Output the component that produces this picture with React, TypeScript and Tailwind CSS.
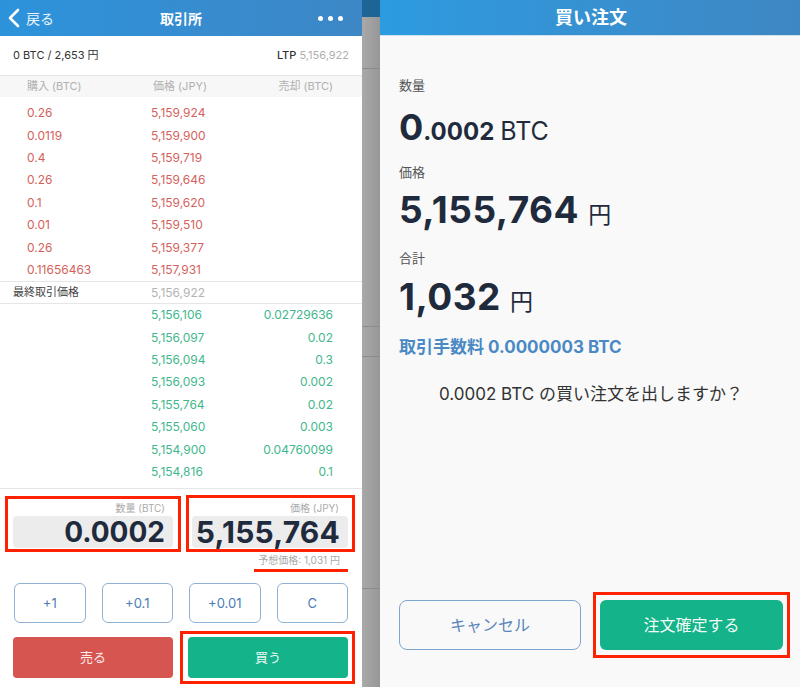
const asks = [
  ["0.26", "5,159,924"],
  ["0.0119", "5,159,900"],
  ["0.4", "5,159,719"],
  ["0.26", "5,159,646"],
  ["0.1", "5,159,620"],
  ["0.01", "5,159,510"],
  ["0.26", "5,159,377"],
  ["0.11656463", "5,157,931"],
];

const bids = [
  ["5,156,106", "0.02729636"],
  ["5,156,097", "0.02"],
  ["5,156,094", "0.3"],
  ["5,156,093", "0.002"],
  ["5,155,764", "0.02"],
  ["5,155,060", "0.003"],
  ["5,154,900", "0.04760099"],
  ["5,154,816", "0.1"],
];

function Exchange() {
  return (
    <div className="w-[362px] h-[687px] bg-white flex flex-col shrink-0">
      <div className="h-[36px] bg-linear-to-r from-[#2c93db] to-[#3d87c6] flex items-center px-[8px] text-white">
        <div className="flex items-center w-[100px]">
          <svg width="12" height="20" viewBox="0 0 12 20">
            <polyline points="10,2 2,10 10,18" fill="none" stroke="white" strokeWidth="2.6" strokeLinecap="round" strokeLinejoin="round" />
          </svg>
          <span className="ml-[6px] text-[14px] text-white/90">戻る</span>
        </div>
        <div className="flex-1 text-center text-[14px] font-bold">取引所</div>
        <div className="w-[100px] flex justify-end gap-[5px] pr-[11px]">
          <span className="w-[5px] h-[5px] rounded-full bg-white" />
          <span className="w-[5px] h-[5px] rounded-full bg-white" />
          <span className="w-[5px] h-[5px] rounded-full bg-white" />
        </div>
      </div>

      <div className="h-[40px] flex items-center justify-between px-[13px] border-b border-[#e6e6e6] text-[11px] text-[#333]">
        <span>0 BTC / 2,653 円</span>
        <span>
          <span className="font-medium">LTP</span> <span className="text-[#b0b0b0]">5,156,922</span>
        </span>
      </div>

      <div className="h-[21px] bg-[#f7f7f7] flex items-center pl-[27px] pr-[29px] text-[11px] text-[#b0b0b0]">
        <span className="w-[126px]">購入 (BTC)</span>
        <span className="flex-1">価格 (JPY)</span>
        <span>売却 (BTC)</span>
      </div>

      <div className="pt-[5px] text-[12px]">
        {asks.map(([q, p], i) => (
          <div key={i} className="h-[22.4px] flex items-center pl-[27px] text-[#d4625c]">
            <span className="w-[124px]">{q}</span>
            <span>{p}</span>
          </div>
        ))}
      </div>

      <div className="h-[23px] border-t border-b border-[#e6e6e6] flex items-center pl-[13px] text-[11px]">
        <span className="w-[138px] text-[#444]">最終取引価格</span>
        <span className="text-[12px] text-[#b3b3b3]">5,156,922</span>
      </div>

      <div className="text-[12px] pb-[5px] border-b border-[#e6e6e6]">
        {bids.map(([p, q], i) => (
          <div key={i} className="h-[22.4px] flex items-center pl-[151px] pr-[29px] text-[#3fb78c]">
            <span className="flex-1">{p}</span>
            <span>{q}</span>
          </div>
        ))}
      </div>

      <div className="flex px-[13px] gap-[19px] pt-[12px]">
        <div className="relative w-[160px]">
          <div className="h-[15px] text-right pr-[8px] text-[10px] leading-[15px] text-[#aaa]">数量 (BTC)</div>
          <div className="h-[32px] rounded-[4px] bg-[#ececec] flex items-center justify-end pr-[8px] text-[28px] font-bold text-[#1f2b3d] leading-none">
            0.0002
          </div>
          <span className="absolute -left-[8px] -right-[8px] -top-[5px] -bottom-[4px] border-[3px] border-[#ff2200]" />
        </div>
        <div className="relative w-[156px]">
          <div className="h-[15px] text-right pr-[9px] text-[10px] leading-[15px] text-[#aaa]">価格 (JPY)</div>
          <div className="h-[32px] rounded-[4px] bg-[#ececec] flex items-center justify-end pr-[8px] text-[30px] tracking-[0.2px] font-bold text-[#1f2b3d] leading-none">
            5,155,764
          </div>
          <span className="absolute -left-[6px] -right-[7px] -top-[6px] -bottom-[4px] border-[3px] border-[#ff2200]" />
        </div>
      </div>

      <div className="mt-[5px] h-[14px] flex justify-end pr-[22px]">
        <span className="relative text-[10px] leading-[14px] text-[#aaa]">
          予想価格: 1,031 円
          <span className="absolute -left-[4px] -right-[8px] top-[16px] h-[3px] bg-[#ff2200]" />
        </span>
      </div>

      <div className="mt-[16px] px-[14px] grid grid-cols-4 gap-4">
        {["+1", "+0.1", "+0.01", "C"].map((t) => (
          <div key={t} className="h-[40px] rounded-[6px] border border-[#8fb1d6] flex items-center justify-center text-[13px] text-[#4a7db5]">
            {t}
          </div>
        ))}
      </div>

      <div className="mt-[14px] pl-[13px] flex gap-[15px]">
        <div className="w-[160px] h-[41px] rounded-[4px] bg-[#d75550] flex items-center justify-center text-[13px] text-white/90">売る</div>
        <div className="relative w-[160px] h-[41px] rounded-[4px] bg-[#15b389] flex items-center justify-center text-[13px] text-white/90">
          買う
          <span className="absolute -left-[8px] -right-[7px] -top-[6px] -bottom-[6px] border-[3px] border-[#ff2200]" />
        </div>
      </div>
    </div>
  );
}

function Divider() {
  return (
    <div className="w-[18px] h-[687px] shrink-0 bg-linear-to-r from-[#a9a9a9] to-[#979797] flex flex-col">
      <div className="h-[17px] bg-[#1e6597]" />
      <div className="h-[51px]" />
      <div className="h-px bg-[#8a8a8a]" />
      <div className="h-[257px]" />
      <div className="h-px bg-[#8c8c8c]" />
      <div className="h-[29px]" />
      <div className="h-px bg-[#8c8c8c]" />
      <div className="h-[231px]" />
      <div className="h-px bg-[#8c8c8c]" />
    </div>
  );
}

function Order() {
  return (
    <div className="flex-1 h-[687px] bg-[#f9f9f9] flex flex-col">
      <div className="h-[36px] bg-linear-to-r from-[#2c9be0] to-[#3e87c3] flex items-center justify-center text-white text-[18px] font-bold border-b border-[#cfe0ee]">
        買い注文
      </div>
      <div className="pl-[19px] text-[#1f2b3d]">
        <div className="mt-[40px] h-[18px] leading-[18px] text-[13px] text-[#555]">数量</div>
        <div className="mt-[11px] h-[44px] flex items-baseline leading-[44px]">
          <span className="text-[36px] font-bold">0</span>
          <span className="text-[24px] font-bold">.0002</span>
          <span className="ml-[6px] text-[25px]">BTC</span>
        </div>
        <div className="mt-[14px] h-[18px] leading-[18px] text-[13px] text-[#555]">価格</div>
        <div className="mt-[7px] h-[44px] flex items-baseline leading-[44px]">
          <span className="text-[37px] tracking-[0.5px] font-bold">5,155,764</span>
          <span className="ml-[9px] text-[23px]">円</span>
        </div>
        <div className="mt-[17px] h-[18px] leading-[18px] text-[13px] text-[#555]">合計</div>
        <div className="mt-[8px] h-[44px] flex items-baseline leading-[44px]">
          <span className="text-[37px] tracking-[0.5px] font-bold">1,032</span>
          <span className="ml-[9px] text-[23px]">円</span>
        </div>
        <div className="mt-[16px] h-[24px] leading-[24px] text-[17px] font-bold text-[#4a89c4]">取引手数料 0.0000003 BTC</div>
      </div>
      <div className="mt-[24px] h-[22px] leading-[22px] text-center text-[17px] text-[#333]">0.0002 BTC の買い注文を出しますか？</div>
      <div className="mt-auto mb-[37px] px-[19px] flex gap-[19px]">
        <div className="w-[182px] h-[50px] rounded-[8px] border border-[#7ea5d0] flex items-center justify-center text-[16px] text-[#5a86b8]">キャンセル</div>
        <div className="relative w-[183px] h-[50px] rounded-[6px] bg-[#15b389] flex items-center justify-center text-[16px] text-white/95">
          注文確定する
          <span className="absolute -left-[7px] -right-[7px] -top-[8px] -bottom-[8px] border-[3px] border-[#ff2200]" />
        </div>
      </div>
    </div>
  );
}

export default function App() {
  return (
    <div className="w-[800px] h-[687px] flex overflow-hidden font-[family-name:Inter,'Noto_Sans_CJK_JP',sans-serif]">
      <Exchange />
      <Divider />
      <Order />
    </div>
  );
}
